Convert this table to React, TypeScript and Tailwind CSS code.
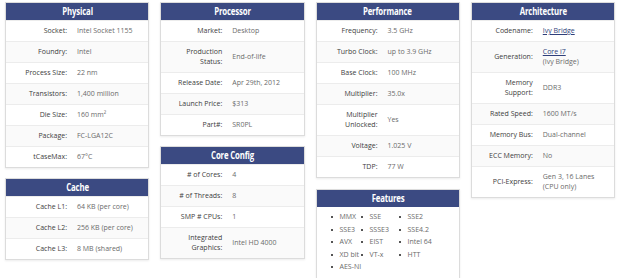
import React from 'react';

type Row = { label: React.ReactNode; value: React.ReactNode };

const Link: React.FC<{ children: React.ReactNode }> = ({ children }) => (
  <span className="text-[#2f3f7a] underline">{children}</span>
);

const physical: Row[] = [
  { label: 'Socket:', value: 'Intel Socket 1155' },
  { label: 'Foundry:', value: 'Intel' },
  { label: 'Process Size:', value: '22 nm' },
  { label: 'Transistors:', value: '1,400 million' },
  { label: 'Die Size:', value: <>160 mm²</> },
  { label: 'Package:', value: 'FC-LGA12C' },
  { label: 'tCaseMax:', value: '67°C' },
];

const cache: Row[] = [
  { label: 'Cache L1:', value: '64 KB (per core)' },
  { label: 'Cache L2:', value: '256 KB (per core)' },
  { label: 'Cache L3:', value: '8 MB (shared)' },
];

const processor: Row[] = [
  { label: 'Market:', value: 'Desktop' },
  { label: <>Production<br />Status:</>, value: 'End-of-life' },
  { label: 'Release Date:', value: 'Apr 29th, 2012' },
  { label: 'Launch Price:', value: '$313' },
  { label: 'Part#:', value: 'SR0PL' },
];

const coreConfig: Row[] = [
  { label: '# of Cores:', value: '4' },
  { label: '# of Threads:', value: '8' },
  { label: 'SMP # CPUs:', value: '1' },
  { label: <>Integrated<br />Graphics:</>, value: 'Intel HD 4000' },
];

const performance: Row[] = [
  { label: 'Frequency:', value: '3.5 GHz' },
  { label: 'Turbo Clock:', value: 'up to 3.9 GHz' },
  { label: 'Base Clock:', value: '100 MHz' },
  { label: 'Multiplier:', value: '35.0x' },
  { label: <>Multiplier<br />Unlocked:</>, value: 'Yes' },
  { label: 'Voltage:', value: '1.025 V' },
  { label: 'TDP:', value: '77 W' },
];

const architecture: Row[] = [
  { label: 'Codename:', value: <Link>Ivy Bridge</Link> },
  { label: 'Generation:', value: <><Link>Core i7</Link><br />(Ivy Bridge)</> },
  { label: <>Memory<br />Support:</>, value: 'DDR3' },
  { label: 'Rated Speed:', value: '1600 MT/s' },
  { label: 'Memory Bus:', value: 'Dual-channel' },
  { label: 'ECC Memory:', value: 'No' },
  { label: 'PCI-Express:', value: <>Gen 3, 16 Lanes<br />(CPU only)</> },
];

const features = ['MMX', 'SSE', 'SSE2', 'SSE3', 'SSSE3', 'SSE4.2', 'AVX', 'EIST', 'Intel 64', 'XD bit', 'VT-x', 'HTT', 'AES-NI'];

const Panel: React.FC<{ title: string; children: React.ReactNode }> = ({ title, children }) => (
  <div className="border border-[#dcdcdc] bg-white shadow-[0_1px_2px_rgba(0,0,0,0.08)]">
    <div className="h-[17px] bg-[#3b4a82] text-white text-center leading-[17px]">
      <span
        className="inline-block font-bold text-[10px] tracking-[-0.2px] scale-x-[0.78]"
        style={{ fontFamily: '"Open Sans", sans-serif' }}
      >
        {title}
      </span>
    </div>
    {children}
  </div>
);

const SpecTable: React.FC<{ rows: Row[] }> = ({ rows }) => (
  <div>
    {rows.map((r, i) => (
      <div key={i} className={`flex items-center border-t border-[#ececec] py-[5px] ${i % 2 === 1 ? 'bg-[#fafafa]' : 'bg-white'}`}>
        <div className="w-[66px] shrink-0 pr-[5px] text-right text-[#3d3d3d] leading-[10px]">{r.label}</div>
        <div className="pl-[5px] text-[#6b6b6b] leading-[10px] whitespace-nowrap">{r.value}</div>
      </div>
    ))}
  </div>
);

const App: React.FC = () => {
  return (
    <div
      className="w-[620px] h-[278px] bg-white px-[5px] pt-[2px] text-[7px] overflow-hidden"
      style={{ fontFamily: '"Open Sans", "Liberation Sans", sans-serif' }}
    >
      <div className="grid grid-cols-4 gap-x-[11px] items-start">
        {/* Column 1 */}
        <div className="flex flex-col gap-[10px]">
          <Panel title="Physical"><SpecTable rows={physical} /></Panel>
          <Panel title="Cache"><SpecTable rows={cache} /></Panel>
        </div>

        {/* Column 2 */}
        <div className="flex flex-col gap-[10px]">
          <Panel title="Processor"><SpecTable rows={processor} /></Panel>
          <Panel title="Core Config"><SpecTable rows={coreConfig} /></Panel>
        </div>

        {/* Column 3 */}
        <div className="flex flex-col gap-[11px]">
          <Panel title="Performance"><SpecTable rows={performance} /></Panel>
          <Panel title="Features">
            <ul className="grid grid-cols-[30px_38px_1fr] pl-[14px] pt-[4px] pb-[5px]">
              {features.map((f) => (
                <li key={f} className="flex items-center h-[12.5px] text-[#6b6b6b] whitespace-nowrap">
                  <span className="w-[2px] h-[2px] bg-[#555] mr-[7px] shrink-0" />
                  {f}
                </li>
              ))}
            </ul>
          </Panel>
        </div>

        {/* Column 4 */}
        <div className="flex flex-col">
          <Panel title="Architecture"><SpecTable rows={architecture} /></Panel>
        </div>
      </div>
    </div>
  );
};

export default App;
